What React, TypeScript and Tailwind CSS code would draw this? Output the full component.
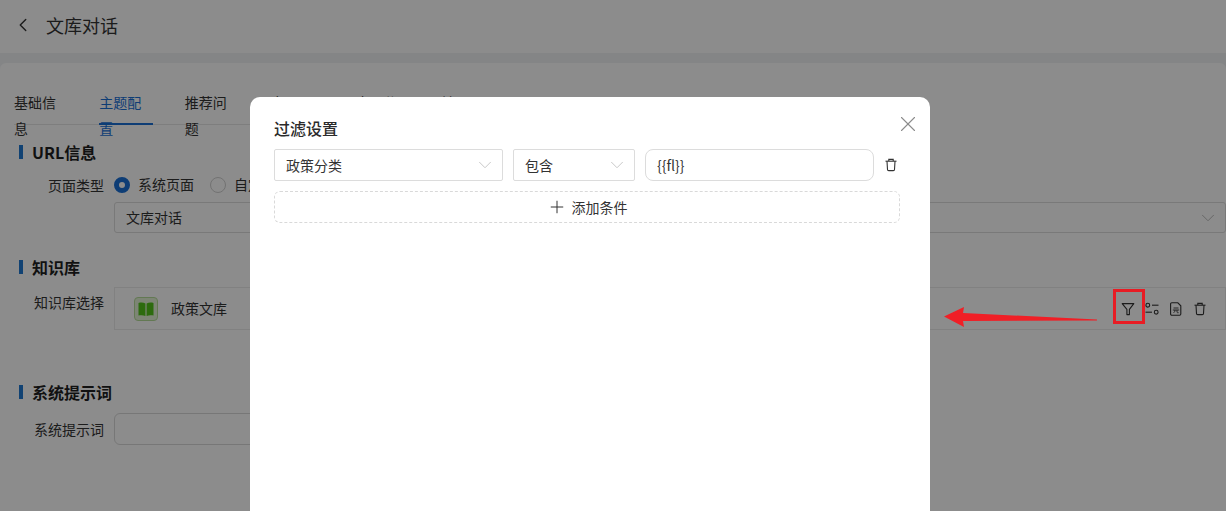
import { ChevronDown, ChevronLeft, Plus, X } from "lucide-react";

const tabs = ["基础信息", "主题配置", "推荐问题", "应用配置", "应用分类", "转写配置"];

const TrashIcon = ({ className }: { className?: string }) => (
  <svg viewBox="0 0 14 14" fill="none" stroke="currentColor" strokeWidth="1.1" className={className}>
    <path d="M1.5 3.2h11" />
    <path d="M4.800 3V1.400h4.400V3" />
    <path d="M3 3.200l.5 8.200c0 .7.5 1.200 1.200 1.200h4.600c.7 0 1.200-.5 1.200-1.200l.5-8.200" />
  </svg>
);

const FunnelIcon = () => (
  <svg viewBox="0 0 14 14" fill="none" stroke="currentColor" strokeWidth="1.1" className="h-[14px] w-[14px]">
    <path d="M1.200 1.600h11.600L8.400 7.400v5.200H5.900V7.400z" strokeLinejoin="round" />
  </svg>
);

const SlidersIcon = () => (
  <svg viewBox="0 0 14 14" fill="none" stroke="currentColor" strokeWidth="1.1" className="h-[14px] w-[14px]">
    <circle cx="2.800" cy="3.200" r="1.900" />
    <path d="M7 3.200h6.500" />
    <path d="M.5 10.200h6.500" />
    <circle cx="11.200" cy="10.200" r="1.900" />
  </svg>
);

const PriceFileIcon = () => (
  <svg viewBox="0 0 14 14" fill="none" stroke="currentColor" strokeWidth="1.1" className="h-[14px] w-[14px]">
    <path d="M2.800.8h6l3 3v8.200c0 .7-.5 1.200-1.200 1.200H2.800c-.7 0-1.200-.5-1.200-1.200V2c0-.7.5-1.200 1.200-1.200z" />
    <path d="M4.500 6h5M3.800 8h6.400M6 8c0 1.400-.5 2.300-1.400 2.800M8 8v2c0 .5.3.8 1.600.7" strokeWidth="0.9" />
  </svg>
);

const SectionTitle = ({ children, className }: { children: string; className: string }) => (
  <div className={`flex items-center gap-[9px] pl-[19px] ${className}`}>
    <span className="h-[14px] w-[4px] bg-[#1f78d1]" />
    <h2 className="text-[16px] leading-[22px] font-bold text-[#1f1f1f]">{children}</h2>
  </div>
);

const Label = ({ children }: { children: string }) => (
  <span className="block w-[104px] shrink-0 text-right text-[14px] leading-[20px] text-[#333]">{children}</span>
);

const Field = ({ children, className }: { children: React.ReactNode; className: string }) => (
  <div className={`flex items-center justify-between border border-[#dcdcdc] pr-[6px] pl-[11px] text-[14px] text-[#333] ${className}`}>
    {children}
  </div>
);

export default function App() {
  return (
    <div
      className="relative h-[511px] w-[1226px] overflow-hidden bg-[#f0f2f5]"
      style={{ fontFamily: '"Noto Sans CJK SC", "Noto Sans", sans-serif' }}
    >
      <header className="flex h-[53px] items-center gap-[12px] bg-white pb-[3px] pl-[12px]">
        <ChevronLeft className="h-[22px] w-[22px] text-[#333]" strokeWidth={1.5} />
        <h1 className="text-[18px] font-normal text-[#333]">文库对话</h1>
      </header>

      <main className="mt-[10px] h-[448px] rounded-t-[6px] bg-white pt-[26px]">
        <nav className="ml-[14px] flex h-[36px] w-[480px] gap-[32px] border-b border-[#e5e5e5]">
          {tabs.map((tab, i) => (
            <span
              key={tab}
              className={`h-[36px] w-[56px] text-[14px] leading-[26px] ${
                i === 1 ? "border-b-2 border-[#1a6fd6] text-[#1a6fd6]" : "text-[#333]"
              }`}
            >
              {tab}
            </span>
          ))}
        </nav>

        <SectionTitle className="mt-[16px]">URL信息</SectionTitle>

        <div className="mt-[11px] flex items-center gap-[10px]">
          <Label>页面类型</Label>
          <div className="flex items-center gap-[8px] text-[14px] text-[#333]">
            <span className="h-[16px] w-[16px] rounded-full border-[5px] border-[#1a6fd6] bg-white" />
            <span>系统页面</span>
            <span className="ml-[8px] h-[16px] w-[16px] rounded-full border border-[#d0d0d0] bg-white" />
            <span>自定义页面</span>
          </div>
        </div>

        <Field className="mt-[7px] ml-[114px] h-[31px] rounded-[3px]">
          <span>文库对话</span>
          <ChevronDown className="h-[22px] w-[22px] text-[#b5b5b5]" strokeWidth={1} />
        </Field>

        <SectionTitle className="mt-[23px]">知识库</SectionTitle>

        <div className="mt-[9px] flex gap-[10px]">
          <div className="pt-[5px]">
            <Label>知识库选择</Label>
          </div>
          <div className="flex h-[43px] grow items-center justify-between border border-[#ebebeb] pr-[18px] pl-[19px]">
            <div className="flex items-center gap-[13px]">
              <span className="flex h-[24px] w-[24px] items-center justify-center rounded-[4px] border border-[#b5dc98] bg-[#e3f3d6]">
                <svg viewBox="0 0 16 14" className="h-[14px] w-[16px]" fill="#52c41a">
                  <path d="M.5 1C2.500.4 5.500.4 7.400 1.400V14C5.500 13 2.500 13 .5 13.500z" />
                  <path d="M15.500 1C13.500.4 10.500.4 8.600 1.400V14c1.900-1 4.900-1 6.900-.5z" />
                </svg>
              </span>
              <span className="text-[14px] text-[#333]">政策文库</span>
            </div>
            <div className="flex items-center gap-[10px] text-[#333]">
              <FunnelIcon />
              <SlidersIcon />
              <PriceFileIcon />
              <TrashIcon className="h-[14px] w-[14px]" />
            </div>
          </div>
        </div>

        <SectionTitle className="mt-[51px]">系统提示词</SectionTitle>

        <div className="mt-[10px] flex items-center gap-[10px]">
          <Label>系统提示词</Label>
          <div className="h-[32px] w-[400px] rounded-[6px] border border-[#d9d9d9]" />
        </div>
      </main>

      {/* mask + modal */}
      <div className="absolute inset-0 bg-black/45">
        <section className="absolute top-[97px] left-[250px] h-[500px] w-[680px] rounded-[10px] bg-white px-[24px] pt-[21px]">
          <div className="flex items-start justify-between">
            <h3 className="text-[16px] leading-[20px] font-medium text-[#2b2b2b]">过滤设置</h3>
            <X className="-mt-[7px] -mr-[15px] h-[26px] w-[26px] text-[#8c8c8c]" strokeWidth={1} />
          </div>

          <div className="mt-[11px] flex items-center">
            <Field className="h-[32px] w-[229px] rounded-[2px]">
              <span>政策分类</span>
              <ChevronDown className="h-[22px] w-[22px] text-[#c4c4c4]" strokeWidth={1} />
            </Field>
            <Field className="ml-[10px] h-[32px] w-[122px] rounded-[2px]">
              <span>包含</span>
              <ChevronDown className="h-[22px] w-[22px] text-[#c4c4c4]" strokeWidth={1} />
            </Field>
            <Field className="ml-[10px] h-[32px] w-[229px] rounded-[8px]">
              <span>{"{{fl}}"}</span>
            </Field>
            <TrashIcon className="ml-[10px] h-[14px] w-[14px] text-[#333]" />
          </div>

          <div className="mt-[10px] flex h-[32px] w-[626px] items-center justify-center gap-[5px] rounded-[6px] border border-dashed border-[#d9d9d9] text-[14px] text-[#333]">
            <Plus className="h-[20px] w-[20px]" strokeWidth={1.2} />
            <span>添加条件</span>
          </div>
        </section>
      </div>

      {/* red annotation */}
      <div className="absolute top-[289px] left-[1113px] h-[35px] w-[32px] border-[3px] border-[#e81c24]" />
      <svg className="absolute top-[305px] left-[940px] h-[24px] w-[160px]" viewBox="0 0 160 24">
        <path d="M4 11.500L24 2l-1 6 134 6.500v1L23 16l1 6z" fill="#f01f26" />
      </svg>
    </div>
  );
}
